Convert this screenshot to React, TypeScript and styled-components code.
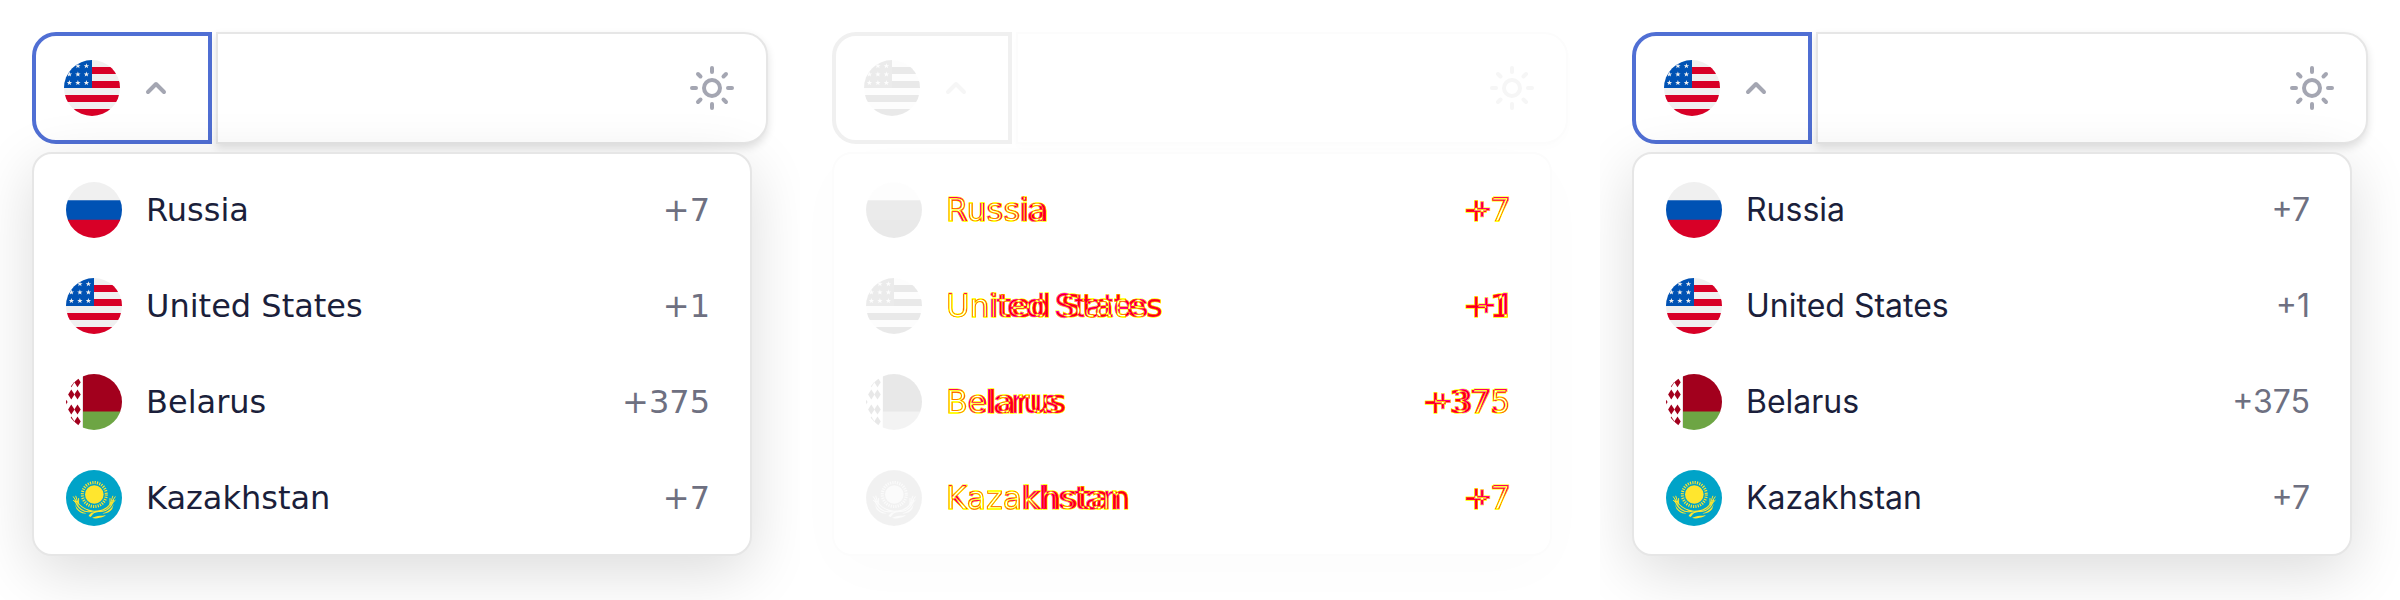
import React from 'react';
import styled, { createGlobalStyle, css } from 'styled-components';

type Variant = 'baseline' | 'diff' | 'current';
type CountryCode = 'ru' | 'us' | 'by' | 'kz';

const GlobalStyle = createGlobalStyle`
  *, *::before, *::after { box-sizing: border-box; }
  body { margin: 0; background: #fff; }
  button, input { font: inherit; color: inherit; }
`;

const fonts = {
  baseline: '"DejaVu Sans", sans-serif',
  current: 'Inter, sans-serif',
};

const palette = {
  solid: { focus: '#506fd4', line: '#e6e6e6', icon: '#a4a6b2', field: '0.12', menu: '0.14' },
  faded: { focus: '#f0f0f0', line: '#fcfcfc', icon: '#f6f6f6', field: '0.012', menu: '0.014' },
};

const tone = (p: { $variant: Variant }) => (p.$variant === 'diff' ? palette.faded : palette.solid);

const Page = styled.main`
  display: grid;
  grid-template-columns: repeat(3, minmax(0, 1fr));
  min-height: 100vh;
`;

const Panel = styled.section`
  display: flex;
  flex-direction: column;
  gap: 8px;
  padding: 32px;
  overflow: hidden;
`;

const PhoneRow = styled.div`
  display: flex;
  gap: 4px;
  height: 112px;
`;

const CountryButton = styled.button<{ $variant: Variant }>`
  display: flex;
  align-items: center;
  gap: 12px;
  flex: none;
  padding: 0 28px;
  border: 4px solid ${(p) => tone(p).focus};
  border-radius: 24px 0 0 24px;
  background: #fff;
  color: ${(p) => tone(p).icon};
`;

const Field = styled.div<{ $variant: Variant }>`
  display: flex;
  align-items: center;
  flex: 1;
  min-width: 0;
  padding: 0 30px;
  border: 2px solid ${(p) => tone(p).line};
  border-radius: 0 24px 24px 0;
  background: #fff;
  color: ${(p) => tone(p).icon};
  box-shadow: 0 4px 8px rgba(0, 0, 0, ${(p) => tone(p).field});
`;

const PhoneInput = styled.input`
  flex: 1;
  min-width: 0;
  height: 100%;
  padding: 0;
  border: 0;
  outline: 0;
  background: transparent;
  color: #1b1f3b;
  font: 32px ${fonts.current};
`;

const IconButton = styled.button`
  display: flex;
  padding: 0;
  border: 0;
  background: transparent;
`;

const Icon = styled.svg`
  display: block;
  width: 48px;
  height: 48px;
  fill: none;
  stroke: currentColor;
  stroke-width: 4;
  stroke-linecap: round;
  stroke-linejoin: round;
`;

const Menu = styled.ul<{ $variant: Variant }>`
  margin: 0 16px 0 0;
  padding: 8px 0;
  list-style: none;
  border: 2px solid ${(p) => tone(p).line};
  border-radius: 20px;
  background: #fff;
  box-shadow: 0 16px 60px rgba(0, 0, 0, ${(p) => tone(p).menu});
`;

const Option = styled.button<{ $variant: Variant }>`
  display: flex;
  align-items: center;
  gap: 24px;
  width: 100%;
  height: 96px;
  padding: 0 40px 0 32px;
  border: 0;
  background: transparent;
  text-align: left;
  font-family: ${(p) => (p.$variant === 'baseline' ? fonts.baseline : fonts.current)};
  font-size: 32px;
  line-height: 48px;
`;

const Name = styled.span`
  flex: 1;
  color: #1b1f3b;
`;

const Code = styled.span`
  color: #6e7081;
`;

const FlagImage = styled.svg<{ $faded: boolean }>`
  display: block;
  flex: none;
  width: 56px;
  height: 56px;
  border-radius: 50%;
  ${(p) =>
    p.$faded &&
    css`
      filter: grayscale(1);
      opacity: 0.1;
    `}
`;

/* Two renderings of one label share a cell; blending leaves only the pixels that differ in red. */
const DiffCell = styled.span<{ $end?: boolean }>`
  display: grid;
  flex: ${(p) => (p.$end ? 'none' : '1')};
  justify-items: ${(p) => (p.$end ? 'end' : 'start')};
  isolation: isolate;
  background: #fff;
`;

const DiffBase = styled.span`
  grid-area: 1 / 1;
  font-family: ${fonts.baseline};
  color: #0ff;
  mix-blend-mode: difference;
`;

const DiffOverlay = styled.span<{ $text: string }>`
  grid-area: 1 / 1;
  font-family: ${fonts.current};
  color: #0ff;
  mix-blend-mode: difference;

  &::after {
    content: '${(p) => p.$text}';
  }
`;

const DiffEdge = styled.span<{ $family: string; $text: string }>`
  grid-area: 1 / 1;
  font-family: ${(p) => p.$family};

  &::after {
    content: '${(p) => p.$text}';
    color: transparent;
    -webkit-text-stroke: 1px #ff0;
  }
`;

/* Tints the blended edges so that they stay between yellow and red. */
const DiffTint = styled(DiffEdge)`
  mix-blend-mode: multiply;
`;

function DiffText({ text, end }: { text: string; end?: boolean }) {
  return (
    <DiffCell $end={end}>
      <DiffBase>{text}</DiffBase>
      <DiffOverlay $text={text} aria-hidden="true" />
      <DiffEdge $family={fonts.baseline} $text={text} aria-hidden="true" />
      <DiffEdge $family={fonts.current} $text={text} aria-hidden="true" />
      <DiffTint $family={fonts.baseline} $text={text} aria-hidden="true" />
    </DiffCell>
  );
}

const star = 'M0-2.7 .7-.8 2.7-.8 1.1.4 1.7 2.3 0 1.1-1.7 2.3-1.1.4-2.7-.8-.7-.8Z';

function UnitedStates() {
  return (
    <>
      <path fill="#f0f0f0" d="M0 0h56v56H0z" />
      <path fill="#d80027" d="M28 7h28v7H28zM28 21h28v7H28zM0 35h56v7H0zM0 49h56v7H0z" />
      <path fill="#0052b4" d="M0 0h28v28H0z" />
      {[6, 14.3, 22.8].map((y) =>
        [5.4, 13.9, 22.4].map((x) => (
          <path key={`${x}-${y}`} fill="#f0f0f0" d={star} transform={`translate(${x} ${y})`} />
        )),
      )}
    </>
  );
}

function Russia() {
  return (
    <>
      <path fill="#f0f0f0" d="M0 0h56v19H0z" />
      <path fill="#0052b4" d="M0 18.3h56v20H0z" />
      <path fill="#d80027" d="M0 37.7h56V56H0z" />
    </>
  );
}

function Belarus() {
  const diamonds = [
    [11.5, 8.2], [5.3, 8.2], [5.3, 20.6], [11.5, 20.6], [-1.6, 28],
    [5.3, 35.4], [11.5, 35.4], [11.5, 47.6], [5.3, 47.6],
  ];
  return (
    <>
      <path fill="#fff" d="M0 0h17v56H0z" />
      <path fill="#e8e4e6" d="M16 0h1v56h-1z" />
      <path fill="#a2001d" d="M17 0h39v38H17z" />
      <path fill="#6da544" d="M17 37.4h39V56H17z" />
      {diamonds.map(([x, y]) => (
        <path key={`${x}-${y}`} fill="#a2001d" d={`M${x} ${y - 5}l3.2 5-3.2 5-3.2-5z`} />
      ))}
    </>
  );
}

function Kazakhstan() {
  return (
    <>
      <path fill="#00a3c8" d="M0 0h56v56H0z" />
      <circle cx="28.3" cy="24.5" r="9.3" fill="#ffe62e" />
      <circle
        cx="28.3" cy="24.5" r="12" fill="none" stroke="#ffe62e" strokeWidth="3"
        strokeDasharray="1.15 1.206"
      />
      <g fill="none" stroke="#ffe62e" strokeLinecap="round">
        <path strokeWidth="1.1" d="M9 30c2 8 9 13.500 17 11.200M12 33c4 5 10 7.800 16 8.200 7 0 14-2 17-9M47.600 30c-2 7-7 12-15 11.500-5 .5-7 2-9 4" />
        <path strokeWidth="1" d="M7.400 26.800 11.500 33M9.800 26.200 12 33M12.600 28.500v5M7.400 30.400l5 4.500M49.200 26.800 45.100 33M46.800 26.200 44.600 33M44 28.500v5M49.200 30.400l-5 4.500" />
      </g>
      <path
        fill="#ffe62e"
        d="M8.500 33c2 5.500 6 9.500 12 10.200-3.500 1-7.500-.8-10-4.200ZM48 33c-2 5.500-6 9.200-11.500 10.200 3.500.8 7.500-1.200 9.700-4.200ZM25.500 47.200c3 .9 5-1.800 9.500-1.400 2 .1 3.500-.8 5-.8-2 2-4.500 2.200-6.500 2.800-3 .9-5.500 1-8-.6ZM22.500 46l3-3.500 2.500.2-3.300 4.200z"
      />
    </>
  );
}

const flags: Record<CountryCode, () => React.JSX.Element> = {
  ru: Russia,
  us: UnitedStates,
  by: Belarus,
  kz: Kazakhstan,
};

function Flag({ country, variant }: { country: CountryCode; variant: Variant }) {
  const Drawing = flags[country];
  return (
    <FlagImage viewBox="0 0 56 56" $faded={variant === 'diff'} aria-hidden="true">
      <Drawing />
    </FlagImage>
  );
}

const countries: { country: CountryCode; name: string; code: string }[] = [
  { country: 'ru', name: 'Russia', code: '+7' },
  { country: 'us', name: 'United States', code: '+1' },
  { country: 'by', name: 'Belarus', code: '+375' },
  { country: 'kz', name: 'Kazakhstan', code: '+7' },
];

function PhoneField({ variant }: { variant: Variant }) {
  return (
    <Panel>
      <PhoneRow>
        <CountryButton type="button" $variant={variant} aria-label="Country" aria-expanded="true">
          <Flag country="us" variant={variant} />
          <Icon viewBox="0 0 48 48" aria-hidden="true">
            <path d="M16 28l8-8 8 8" />
          </Icon>
        </CountryButton>
        <Field $variant={variant}>
          <PhoneInput type="tel" aria-label="Phone number" />
          <IconButton type="button" aria-label="Brightness">
            <Icon viewBox="0 0 48 48" aria-hidden="true">
              <circle cx="24" cy="24" r="8" />
              <path d="M24 4v4M24 40v4M4 24h4M40 24h4M10 10l2.500 2.500M35.500 35.500L38 38M10 38l2.500-2.500M35.500 12.500L38 10" />
            </Icon>
          </IconButton>
        </Field>
      </PhoneRow>
      <Menu $variant={variant}>
        {countries.map(({ country, name, code }) => (
          <li key={country}>
            <Option type="button" $variant={variant}>
              <Flag country={country} variant={variant} />
              {variant === 'diff' ? (
                <>
                  <DiffText text={name} />
                  <DiffText text={code} end />
                </>
              ) : (
                <>
                  <Name>{name}</Name>
                  <Code>{code}</Code>
                </>
              )}
            </Option>
          </li>
        ))}
      </Menu>
    </Panel>
  );
}

export default function App() {
  return (
    <>
      <GlobalStyle />
      <Page>
        <PhoneField variant="baseline" />
        <PhoneField variant="diff" />
        <PhoneField variant="current" />
      </Page>
    </>
  );
}
